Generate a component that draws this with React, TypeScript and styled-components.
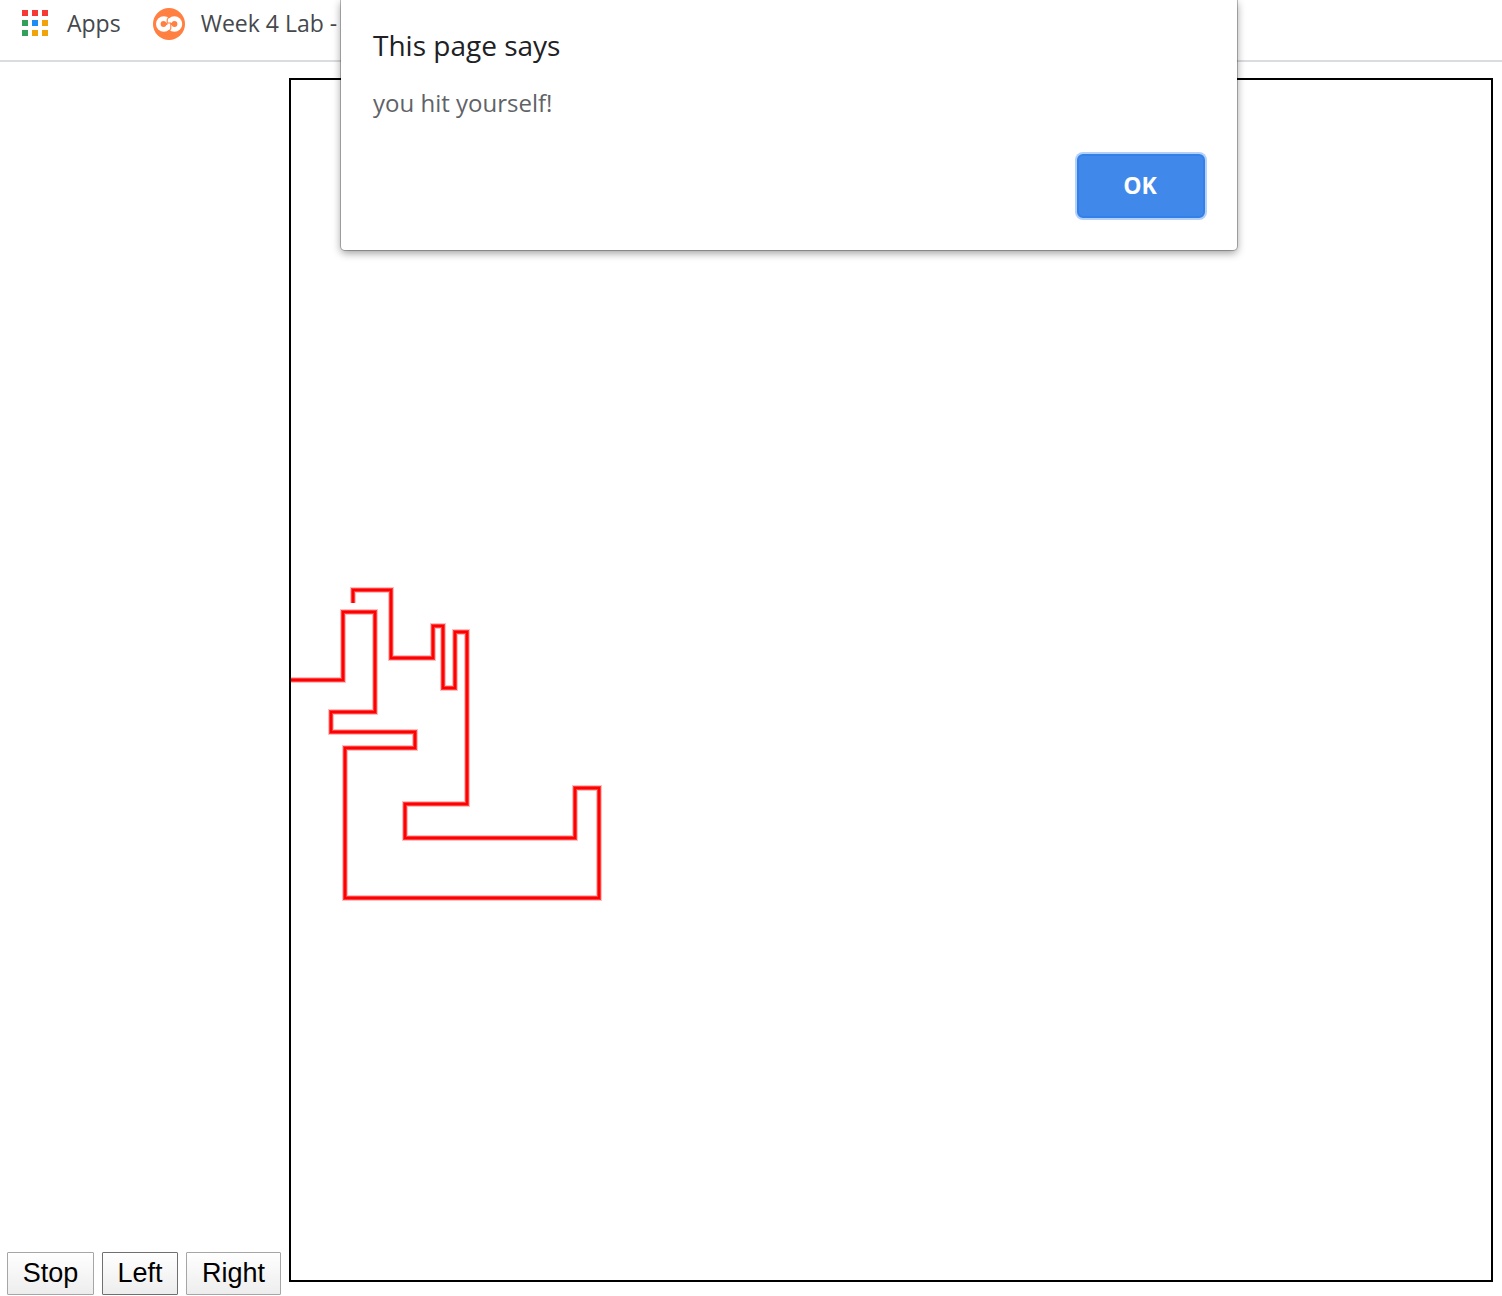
import React from "react";
import styled, { createGlobalStyle } from "styled-components";

const GlobalStyle = createGlobalStyle`
  *, *::before, *::after { box-sizing: border-box; }
  body { margin: 0; background: #fff; }
`;

const uiFont = `"Open Sans", "Noto Sans", sans-serif`;

const Browser = styled.div`
  position: relative;
  overflow: hidden;
`;

const BookmarkBar = styled.nav`
  display: flex;
  align-items: flex-start;
  gap: 32px;
  height: 62px;
  padding: 8px 22px;
  border-bottom: 2px solid #dadce0;
`;

const Bookmark = styled.a<{ $gap: number }>`
  display: flex;
  align-items: flex-start;
  gap: ${(p) => p.$gap}px;
  color: #45484c;
  font: 400 23px/30px ${uiFont};
  text-decoration: none;
  white-space: nowrap;
`;

const AppsGrid = styled.span`
  display: grid;
  grid-template-columns: repeat(3, 6px);
  grid-auto-rows: 6px;
  gap: 4px;
  padding-top: 2px;
`;

const Dot = styled.span<{ $color: string }>`
  background: ${(p) => p.$color};
`;

const Game = styled.main`
  display: flex;
  align-items: baseline;
  gap: 8px;
  padding: 16px 9px 0 7px;
`;

const Controls = styled.div`
  display: grid;
  grid-template-columns: 87px 76px 95px;
  gap: 8px;
`;

const ControlButton = styled.button<{ $active?: boolean }>`
  height: 43px;
  padding: 0;
  border: 1px solid ${(p) => (p.$active ? "#707070" : "#a6a6a6")};
  border-radius: 1px;
  background: linear-gradient(#fff, #ededed);
  color: #000;
  font: 400 27px/38px "Liberation Sans", Arial, sans-serif;
`;

const Board = styled.svg`
  display: block;
  flex: 1;
  min-width: 0;
  aspect-ratio: 1;
  border: 2px solid #000;
`;

const Dialog = styled.section`
  position: absolute;
  top: 0;
  left: 341px;
  display: flex;
  flex-direction: column;
  width: 896px;
  height: 250px;
  padding: 26px 32px 32px;
  border-radius: 0 0 4px 4px;
  background: #fff;
  box-shadow: 0 0 0 1px rgba(0, 0, 0, 0.25), 0 3px 8px rgba(0, 0, 0, 0.4);
  font-family: ${uiFont};
`;

const DialogTitle = styled.h1`
  margin: 0;
  color: #202124;
  font-size: 28px;
  font-weight: 400;
  line-height: 38px;
`;

const DialogMessage = styled.p`
  margin: 22px 0 0;
  color: #5f6368;
  font-size: 24px;
  line-height: 34px;
`;

const OkButton = styled.button`
  align-self: flex-end;
  width: 128px;
  height: 64px;
  margin-top: auto;
  padding: 0 2px 2px 0;
  border: 2px solid #3480e8;
  border-radius: 6px;
  background: #4089eb;
  box-shadow: 0 0 0 2px #b3d1fa;
  color: #fff;
  font: 700 23px/32px ${uiFont};
`;

const red = "#f53a35";
const green = "#32a05a";
const blue = "#1e8cf5";
const yellow = "#f0a30a";
const dots = [red, red, red, green, blue, yellow, green, yellow, yellow];

const trail =
  "M0 600H52V532H84V632H40V652H124V668H54V818H308V708H284V758H114V724H176V552H164V608H152V546H142V578H100V510H62V523";

// The stacked strokes give the trail its smooth, anti-aliased edge.
const trailLayers = [
  { width: 6, opacity: 0.25 },
  { width: 4, opacity: 0.67 },
  { width: 2, opacity: 1 },
];

function CodioLogo() {
  return (
    <svg width="32" height="32" viewBox="0 0 32 32" aria-hidden="true">
      <circle cx="16" cy="16" r="16" fill="#ff8040" />
      <circle cx="10.8" cy="16" r="7.8" fill="#fff" />
      <circle cx="21.4" cy="16" r="7.8" fill="#fff" />
      <path d="M17 7.5L14.2 11.4V15H17.8V17.4V20.6L15 24.5" fill="none" stroke="#ff8040" strokeWidth="1.1" />
      <path d="M10.5 16H14.4M17.6 16H21.5" stroke="#ff8040" strokeWidth="1.8" />
      <circle cx="10.5" cy="16" r="2.9" fill="#ff8040" />
      <circle cx="21.5" cy="16" r="2.9" fill="#ff8040" />
    </svg>
  );
}

export default function App() {
  return (
    <Browser>
      <GlobalStyle />
      <BookmarkBar>
        <Bookmark href="#apps" $gap={19}>
          <AppsGrid>
            {dots.map((color, i) => (
              <Dot key={i} $color={color} />
            ))}
          </AppsGrid>
          Apps
        </Bookmark>
        <Bookmark href="#lab" $gap={16}>
          <CodioLogo />
          Week 4 Lab -
        </Bookmark>
      </BookmarkBar>
      <Game>
        <Controls>
          <ControlButton type="button">Stop</ControlButton>
          <ControlButton type="button" $active>
            Left
          </ControlButton>
          <ControlButton type="button">Right</ControlButton>
        </Controls>
        <Board viewBox="0 0 1200 1200" role="img" aria-label="Snake trail">
          {trailLayers.map((layer) => (
            <path
              key={layer.width}
              d={trail}
              fill="none"
              stroke="#f00"
              strokeWidth={layer.width}
              strokeOpacity={layer.opacity}
            />
          ))}
        </Board>
      </Game>
      <Dialog role="alertdialog" aria-labelledby="dialog-title" aria-describedby="dialog-message">
        <DialogTitle id="dialog-title">This page says</DialogTitle>
        <DialogMessage id="dialog-message">you hit yourself!</DialogMessage>
        <OkButton type="button">OK</OkButton>
      </Dialog>
    </Browser>
  );
}
